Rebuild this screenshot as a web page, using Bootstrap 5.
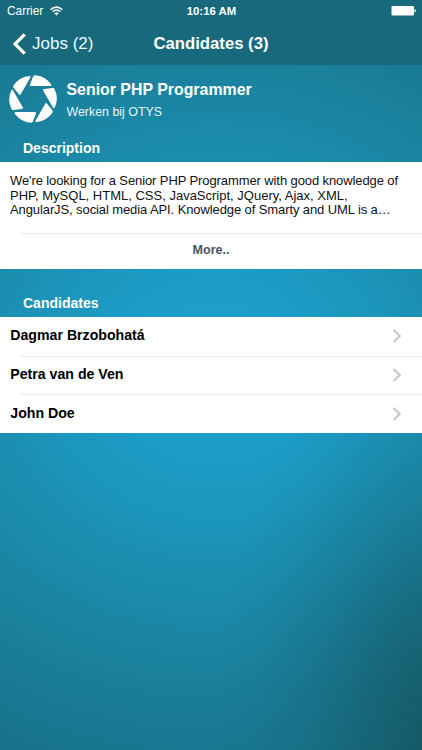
<!DOCTYPE html>
<html lang="en">
<head>
<meta charset="utf-8">
<meta name="viewport" content="width=device-width, initial-scale=1">
<title>Candidates</title>
<link href="https://cdn.jsdelivr.net/npm/bootstrap@5.3.0/dist/css/bootstrap.min.css" rel="stylesheet">
<style>
body{font-family:"Liberation Sans",Arial,sans-serif;height:750px;overflow:hidden;color:#fff;
background:radial-gradient(ellipse 240px 400px at 450px 740px,rgba(20,80,88,.82) 0%,rgba(20,82,92,.56) 28%,rgba(20,86,99,.25) 58%,rgba(20,90,105,.07) 82%,rgba(20,90,105,0) 100%),radial-gradient(ellipse 500px 440px at 215px 370px,#1ca2cd 0%,#1c9dc7 20%,#1b8cad 50%,#1a7f9a 72%,#18768e 90%,#187086 100%);}
.topbar{height:65px;background:#17697b}
.status{height:22px;font-size:11.9px;line-height:22px;padding:0 6px 0 7px}
.status-time{font-size:11.4px}
.wifi{margin-left:7px}
.nav-row{height:43px;line-height:43px}
.back{font-size:17px;color:#e9fbff}
.back svg{margin:0 5px 0 12px}
.page-title{font-size:16.7px}
.job{height:68px;padding:10px 0 0 9px}
.job-text{padding-left:9.5px}
.job h1{font-size:15.9px;line-height:20px;margin:5px 0 0}
.job p{font-size:12.4px;line-height:18px;margin:3px 0 0;color:#e2f7fc}
.section-label{font-size:14px;line-height:20px;padding-left:23px;margin:0}
.label-desc{height:29px;padding-top:5px}
.label-people{height:48px;padding-top:24px}
.desc{height:107px;color:#111}
.desc p{font-size:13px;line-height:14.5px;margin:0;padding:12px 0 0 10px;height:71px;white-space:nowrap}
.tight{letter-spacing:-.1px}
.rule{margin-left:21px;height:1px;background:#ebebed}
.more{font-size:12.5px;line-height:33px;color:#475466}
.person{height:38.67px;font-size:14.15px;padding:0 20px 0 10.300px;color:#000}
.person span{padding-bottom:1px}
.person + .person{background:linear-gradient(#ebebed,#ebebed) 21px 0/100% 1px no-repeat}
</style>
<script src="https://cdn.jsdelivr.net/npm/bootstrap@5.3.0/dist/js/bootstrap.bundle.min.js"></script>
</head>
<body>
<header class="topbar">
  <div class="status row g-0">
    <div class="col d-flex align-items-center"><span>Carrier</span>
      <svg class="wifi" width="13" height="10" viewBox="0 0 13 10" fill="none" stroke="#fff" stroke-width="1.6"><path d="M.7 3.6Q6.500-1.500 12.300 3.600M2.700 5.700Q6.500 2.300 10.300 5.700"/><path d="M4.300 7.200Q6.500 5.400 8.700 7.200L6.500 9.400Z" fill="#fff" stroke="none"/></svg>
    </div>
    <div class="col-auto fw-bold status-time">10:16 AM</div>
    <div class="col d-flex align-items-center justify-content-end">
      <svg width="25" height="10" viewBox="0 0 25 10" fill="#fff"><rect x=".5" width="22.500" height="9.500" rx="1"/><path d="M23.500 3.200Q25 3.400 25 4.800T23.500 6.400Z"/></svg>
    </div>
  </div>
  <nav class="nav-row row g-0">
    <a class="col back d-flex align-items-center text-decoration-none" href="#">
      <svg width="15" height="22" viewBox="0 0 15 22" fill="none" stroke="#fff" stroke-width="3.2"><path d="M12.700 1.300L3 11L12.700 20.700"/></svg>Jobs (2)</a>
    <div class="col-auto page-title fw-bold">Candidates (3)</div>
    <div class="col"></div>
  </nav>
</header>
<main>
  <section class="job d-flex align-items-start">
    <svg width="48" height="48" viewBox="0 0 48 48" fill="#fff" class="flex-shrink-0"><defs><path id="blade" d="M26 .3Q36 1 42 9Q43.200 11 41 11H22Q20.300 11 21 9.400L24 1.800Q24.600 .3 26 .3Z"/></defs>
    <use href="#blade"/><use href="#blade" transform="rotate(60 24 24)"/><use href="#blade" transform="rotate(120 24 24)"/><use href="#blade" transform="rotate(180 24 24)"/><use href="#blade" transform="rotate(240 24 24)"/><use href="#blade" transform="rotate(300 24 24)"/></svg>
    <div class="job-text"><h1 class="fw-bold">Senior PHP Programmer</h1><p>Werken bij OTYS</p></div>
  </section>
  <h2 class="section-label label-desc fw-bold">Description</h2>
  <section class="desc bg-white">
    <p><span class="tight">We're looking for a Senior PHP Programmer with good knowledge of</span><br>PHP, MySQL, HTML, CSS, JavaScript, JQuery, Ajax, XML,<br><span class="tight">AngularJS, social media API. Knowledge of Smarty and UML is a…</span></p>
    <div class="rule"></div>
    <div class="more text-center fw-bold">More..</div>
  </section>
  <h2 class="section-label label-people fw-bold">Candidates</h2>
  <section class="people bg-white">
    <div class="person fw-bold d-flex align-items-center justify-content-between"><span>Dagmar Brzobohatá</span><svg width="10" height="14" viewBox="0 0 10 14" fill="none" stroke="#c5c5ca" stroke-width="2"><path d="M1.500 1L7.800 7L1.500 13"/></svg></div>
    <div class="person fw-bold d-flex align-items-center justify-content-between"><span>Petra van de Ven</span><svg width="10" height="14" viewBox="0 0 10 14" fill="none" stroke="#c5c5ca" stroke-width="2"><path d="M1.500 1L7.800 7L1.500 13"/></svg></div>
    <div class="person fw-bold d-flex align-items-center justify-content-between"><span>John Doe</span><svg width="10" height="14" viewBox="0 0 10 14" fill="none" stroke="#c5c5ca" stroke-width="2"><path d="M1.500 1L7.800 7L1.500 13"/></svg></div>
  </section>
</main>
</body>
</html>
